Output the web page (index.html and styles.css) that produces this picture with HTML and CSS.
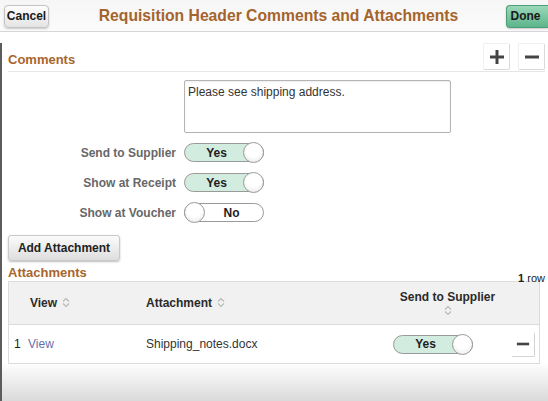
FILE: index.html
```html
<!DOCTYPE html>
<html lang="en">
<head>
  <meta charset="UTF-8" />
  <title>Requisition Header Comments and Attachments</title>
  <link rel="stylesheet" href="styles.css">
</head>
<body>

  <!-- TOP BAR -->
  <div class="topbar">
    <button class="btn-cancel">Cancel</button>
    <h1>Requisition Header Comments and Attachments</h1>
    <button class="btn-done">Done</button>
  </div>

  <div class="content">

    <!-- COMMENTS -->
    <div class="sec-head">
      <h2>Comments</h2>
      <div class="tools">
        <button class="tile">
          <svg width="16" height="16" viewBox="0 0 16 16"><path d="M8 1v14M1 8h14" stroke="#444" stroke-width="3"/></svg>
        </button>
        <button class="tile">
          <svg width="16" height="16" viewBox="0 0 16 16"><path d="M1 8h14" stroke="#444" stroke-width="3"/></svg>
        </button>
      </div>
    </div>

    <div class="comment-wrap">
      <div class="comment-box">Please see shipping address.</div>
    </div>

    <div class="flags">
      <span class="flag-label">Send to Supplier</span>
      <span class="toggle on"><b>Yes</b><i></i></span>
      <span class="flag-label">Show at Receipt</span>
      <span class="toggle on"><b>Yes</b><i></i></span>
      <span class="flag-label">Show at Voucher</span>
      <span class="toggle off"><i></i><b>No</b></span>
    </div>

    <button class="btn-add">Add Attachment</button>

    <!-- ATTACHMENTS -->
    <div class="att-head">
      <h2>Attachments</h2>
      <span class="rows"><b>1</b> row</span>
    </div>

    <div class="grid">
      <div class="grid-row head">
        <div class="c1">View <svg class="sort" width="8" height="11" viewBox="0 0 8 11"><path d="M1 4.5L4 1.5L7 4.5M1 6.5L4 9.5L7 6.5" fill="none" stroke="#b9b9b9" stroke-width="1.2"/></svg></div>
        <div class="c2">Attachment <svg class="sort" width="8" height="11" viewBox="0 0 8 11"><path d="M1 4.5L4 1.5L7 4.5M1 6.5L4 9.5L7 6.5" fill="none" stroke="#b9b9b9" stroke-width="1.2"/></svg></div>
        <div class="c3">
          <span>Send to Supplier</span>
          <svg class="sort" width="8" height="11" viewBox="0 0 8 11"><path d="M1 4.5L4 1.5L7 4.5M1 6.5L4 9.5L7 6.5" fill="none" stroke="#b9b9b9" stroke-width="1.2"/></svg>
        </div>
        <div class="c4"></div>
      </div>
      <div class="grid-row">
        <div class="c1"><span class="num">1</span><a href="#">View</a></div>
        <div class="c2">Shipping_notes.docx</div>
        <div class="c3"><span class="toggle on"><b>Yes</b><i></i></span></div>
        <div class="c4">
          <button class="tile small">
            <svg width="14" height="14" viewBox="0 0 16 16"><path d="M1 8h14" stroke="#444" stroke-width="3"/></svg>
          </button>
        </div>
      </div>
    </div>

  </div>
</body>
</html>
```

FILE: styles.css
```css
* {
  margin: 0; padding: 0;
  box-sizing: border-box;
  font-family: 'Liberation Sans', Arial, sans-serif;
}

body {
  width: 548px;
  height: 401px;
  overflow: hidden;
  background: linear-gradient(to bottom, #fff 0, #fff 362px, #dadada 401px);
  color: #333;
  font-size: 12px;
}

button {
  cursor: pointer;
}

.topbar {
  height: 32px;
  display: flex;
  align-items: center;
  justify-content: space-between;
  padding: 0 0 0 4px;
  background: linear-gradient(to bottom, #f6f6f6, #fbfbfb);
  border-bottom: 1px solid #d6d6d6;
}

.topbar h1 {
  font-size: 15.7px;
  color: #a5642c;
  font-weight: bold;
  margin-left: 2px;
}

.btn-cancel {
  height: 23px;
  width: 45px;
  margin-top: 1px;
  font-size: 12px;
  font-weight: bold;
  color: #1a1a1a;
  background: linear-gradient(to bottom, #fdfdfd, #e4e4e4);
  border: 1px solid #c4c4c4;
  border-radius: 4px;
  box-shadow: 0 1px 2px rgba(0,0,0,0.2);
}

.btn-done {
  height: 23px;
  width: 42px;
  margin-top: 1px;
  padding-right: 4px;
  font-size: 12px;
  font-weight: bold;
  color: #1a1a1a;
  background: linear-gradient(to bottom, #9ad8b8, #5db58b);
  border: 1px solid #4d9e77;
  border-right: none;
  border-radius: 4px 0 0 4px;
  box-shadow: 0 1px 2px rgba(0,0,0,0.2);
}

.content {
  height: 369px;
  border-left: 2px solid #5c5c5c;
  padding: 0 8px 0 6px;
}

h2 {
  font-size: 13px;
  font-weight: bold;
  color: #a8652d;
}

.sec-head {
  display: flex;
  justify-content: space-between;
  align-items: flex-end;
  margin: 11px -5px 0 0;
  border-bottom: 1px solid #e6e6e6;
  padding-bottom: 1px;
}

.sec-head h2 {
  padding-bottom: 3px;
}

.tools {
  display: flex;
  gap: 8px;
}

.tile {
  width: 27px;
  height: 27px;
  display: flex;
  align-items: center;
  justify-content: center;
  background: #fff;
  border: 1px solid #f0f0f0;
  border-right-color: #dadada;
  border-bottom-color: #dadada;
  border-radius: 2px;
}

.comment-wrap {
  padding-left: 176px;
  margin-top: 8px;
}

.comment-box {
  width: 267px;
  height: 53px;
  border: 1px solid #b4b4b4;
  border-radius: 2px;
  padding: 4px 3px;
  font-size: 12px;
  color: #333;
  box-shadow: inset 0 1px 2px rgba(0,0,0,0.08);
}

.flags {
  display: grid;
  grid-template-columns: 168px 80px;
  column-gap: 8px;
  row-gap: 11px;
  align-items: center;
  margin-top: 10px;
}

.flag-label {
  text-align: right;
  font-weight: bold;
  color: #676767;
}

.toggle {
  width: 80px;
  height: 19px;
  display: flex;
  align-items: center;
  border: 1px solid #9a9a9a;
  border-radius: 10px;
}

.toggle b {
  flex: 1;
  text-align: center;
  font-size: 12px;
  color: #1e1e1e;
}

.toggle i {
  width: 21px;
  height: 21px;
  margin: -1px;
  border: 1px solid #9a9a9a;
  border-radius: 50%;
  background: radial-gradient(circle at 50% 35%, #fff 45%, #e4e4e4);
}

.toggle.on {
  background: #d2ece0;
}

.toggle.on b {
  padding-left: 4px;
}

.toggle.off {
  background: #fff;
}

.toggle.off b {
  padding-right: 4px;
}

.btn-add {
  margin-top: 13px;
  height: 26px;
  width: 112px;
  font-size: 12px;
  font-weight: bold;
  color: #222;
  background: linear-gradient(to bottom, #fbfbfb, #dedede);
  border: 1px solid #c8c8c8;
  border-radius: 3px;
  box-shadow: 0 1px 2px rgba(0,0,0,0.25);
}

.att-head {
  display: flex;
  justify-content: space-between;
  align-items: flex-end;
  margin-top: 4px;
  margin-right: -5px;
}

.rows {
  font-size: 11px;
  color: #222;
  margin-bottom: -4px;
}

.grid {
  margin-top: 1px;
  width: 532px;
  border: 1px solid #dcdcdc;
}

.grid-row {
  display: grid;
  grid-template-columns: 137px 247px 103px 1fr;
  align-items: center;
  height: 38px;
  background: #fff;
}

.grid-row.head {
  height: 43px;
  background: #f1f1f1;
  border-bottom: 1px solid #dcdcdc;
  font-weight: bold;
  color: #2a2a2a;
}

.grid-row.head .c1 {
  padding-left: 21px;
}

.grid-row.head .c3 {
  display: flex;
  flex-direction: column;
  align-items: center;
  gap: 1px;
  padding-left: 6px;
  white-space: nowrap;
}

.sort {
  margin-left: 2px;
  vertical-align: -1px;
}

.c3 .sort {
  margin-left: 0;
}

.num {
  display: inline-block;
  width: 19px;
  padding-left: 5px;
  color: #222;
}

.grid-row a {
  color: #6670ad;
  text-decoration: none;
}

.c4 {
  display: flex;
  justify-content: flex-end;
  padding-right: 4px;
}

.tile.small {
  width: 24px;
  height: 25px;
  border-color: #fff #d4d4d4 #d4d4d4 #fff;
}
```
